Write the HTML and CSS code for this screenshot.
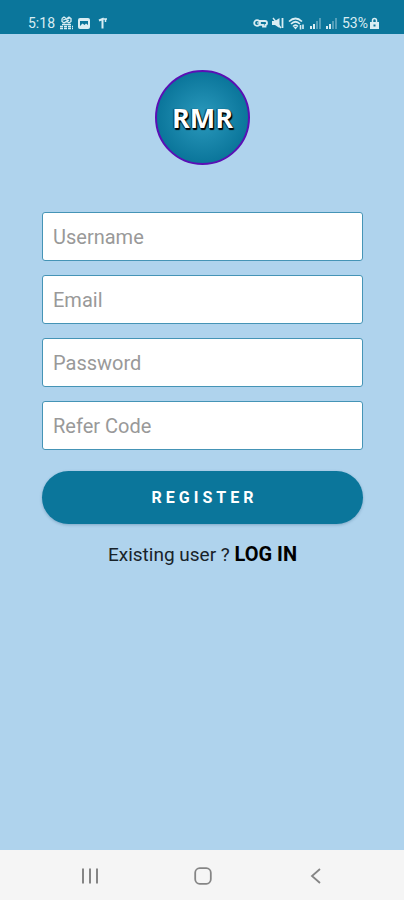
FILE: index.html
```html
<!DOCTYPE html>
<html lang="en">
<head>
<meta charset="utf-8">
<meta name="viewport" content="width=device-width, initial-scale=1">
<title>Register</title>
<link rel="stylesheet" href="styles.css">
</head>
<body>
<header class="status">
  <div class="status-group">
    <span class="time">5:18</span>
    <svg class="icon-app" width="15" height="14" viewBox="0 0 15 14" fill="none" stroke="currentColor">
      <path d="M3 2.500 5 1l2 1.500M3 2.500v3l2 1.500 2-1.500M8 2.500 10 1l2 1.500v3L10 7 8 5.500zM4 4l7-2M5 7l5-3" stroke-width="1.300"/>
      <path d="M1 10.500h13M1 12.500h13" stroke-width="1.600" stroke-dasharray="3 1"/>
      <path d="M3 8.500h9" stroke-width="1.400"/>
    </svg>
    <svg class="icon-image" width="12" height="11" viewBox="0 0 12 11">
      <path fill="currentColor" fill-rule="evenodd" d="M2 0h8a2 2 0 0 1 2 2v7a2 2 0 0 1-2 2H2a2 2 0 0 1-2-2V2a2 2 0 0 1 2-2zm0 3v5l2.500-2.500L6.500 7 8 5.500 10 7V3z"/>
    </svg>
    <svg class="icon-one" width="10" height="12" viewBox="0 0 10 12" fill="none" stroke="currentColor">
      <path d="M1 3.500 4.500 2v9.500" stroke-width="2"/>
      <path d="M5 2h4M7.500 2v3" stroke-width="1.500"/>
    </svg>
  </div>
  <div class="status-group status-right">
    <svg width="15" height="10" viewBox="0 0 15 10" fill="none" stroke="currentColor" stroke-width="1.800">
      <circle cx="4" cy="5" r="2.800"/>
      <path d="M6 3h6q2 0 2 2t-1.500 2v1.500H10V6.800H6.500"/>
      <path d="M4 5h4" stroke-width="1.200"/>
    </svg>
    <svg class="icon-mute" width="12" height="12" viewBox="0 0 12 12" fill="none" stroke="currentColor">
      <path d="M0 4h3l4.500-3v10L3 8H0z" fill="currentColor" stroke="none"/>
      <path d="M1 1l8 10" stroke-width="1.400"/>
      <path d="M10.500 1v10" stroke-width="1.800"/>
    </svg>
    <svg class="icon-wifi" width="18" height="13" viewBox="0 0 18 13" fill="none" stroke="currentColor" stroke-width="1.700">
      <path d="M1 4.500q6.500-6 13 0M3 7q4.500-4.500 9 0M5 9.500q2.500-2.500 5 0"/>
      <path d="M5.500 10h4l-2 2.500z" fill="currentColor" stroke="none"/>
      <path d="M12.500 8v4.500M15 7.500V12" stroke-width="1.600"/>
    </svg>
    <svg class="icon-signal" width="12" height="11" viewBox="0 0 12 11" fill="currentColor">
      <path d="M0 8h2v3H0zM3 6h2v5H3z"/>
      <path opacity=".35" d="M6 3h2v8H6zM9 0h2v11H9z"/>
    </svg>
    <svg class="icon-signal" width="12" height="11" viewBox="0 0 12 11" fill="currentColor">
      <path d="M0 8h2v3H0zM3 6h2v5H3z"/>
      <path opacity=".35" d="M6 3h2v8H6zM9 0h2v11H9z"/>
    </svg>
    <span class="battery">53%</span>
    <svg class="icon-lock" width="9" height="12" viewBox="0 0 9 12">
      <path d="M2.500 5V3.500q0-2 2-2t2 2V5" fill="none" stroke="currentColor" stroke-width="1.500"/>
      <path d="M0 5h9v7H0zM3.500 7.500v2h2v-2z" fill="currentColor" fill-rule="evenodd"/>
    </svg>
  </div>
</header>
<main class="content">
  <h1 class="logo">RMR</h1>
  <form class="form">
    <input class="field" type="text" placeholder="Username" aria-label="Username">
    <input class="field" type="email" placeholder="Email" aria-label="Email">
    <input class="field" type="password" placeholder="Password" aria-label="Password">
    <input class="field" type="text" placeholder="Refer Code" aria-label="Refer Code">
    <button class="register" type="submit">REGISTER</button>
  </form>
  <p class="existing">Existing user ? <a class="login" href="#">LOG IN</a></p>
</main>
<nav class="navbar" aria-label="System">
  <button class="nav-button" type="button" aria-label="Recent apps">
    <svg width="18" height="18" viewBox="0 0 18 18" fill="none" stroke="currentColor" stroke-width="2"><path d="M2 1.500v15M9 1.500v15M16 1.500v15"/></svg>
  </button>
  <button class="nav-button" type="button" aria-label="Home">
    <svg width="18" height="18" viewBox="0 0 18 18" fill="none" stroke="currentColor" stroke-width="1.800"><rect x="1.200" y="1.200" width="15.600" height="15.600" rx="4.500"/></svg>
  </button>
  <button class="nav-button" type="button" aria-label="Back">
    <svg width="18" height="18" viewBox="0 0 18 18" fill="none" stroke="currentColor" stroke-width="1.800"><path d="M13 2 5 9l8 7"/></svg>
  </button>
</nav>
</body>
</html>
```
FILE: styles.css
```css
* {
  box-sizing: border-box;
}

body {
  margin: 0;
  min-height: 100vh;
  display: flex;
  flex-direction: column;
  background: #afd3ed;
  font-family: Roboto, "Liberation Sans", sans-serif;
  color: #182229;
}

.status {
  display: flex;
  justify-content: space-between;
  height: 34px;
  padding: 12px 25px 0 28px;
  background: #0b769b;
  color: #d9edf3;
  font-size: 14px;
  line-height: 22px;
}

.status-group {
  display: flex;
  align-items: center;
  gap: 4px;
}

.icon-one {
  margin-left: 4px;
}

.status-right {
  gap: 4px;
}

.battery {
  margin-right: -2px;
}

.content {
  flex: 1;
  display: flex;
  flex-direction: column;
  padding: 36px 41px 0 42px;
}

.logo {
  align-self: center;
  display: flex;
  align-items: center;
  justify-content: center;
  width: 95px;
  height: 95px;
  margin: 0 0 47px;
  border: 2px solid #5a0fb5;
  border-radius: 50%;
  background: radial-gradient(circle, #2b9abd, #0b769b 70%);
  color: #fff;
  font-family: "Open Sans", "Noto Sans", sans-serif;
  font-size: 27px;
  font-weight: 700;
  line-height: 32px;
  text-shadow: 1px 1px 1px #000, 1px 2px 1px #000, -1px 0 1px #063a4e;
}

.form {
  display: flex;
  flex-direction: column;
  gap: 14px;
}

.field {
  width: 100%;
  height: 49px;
  padding: 0 10px;
  border: 1px solid #4594b6;
  border-radius: 3px;
  background: #fff;
  color: #222;
  font-family: inherit;
  font-size: 20px;
}

.field::placeholder {
  color: #999;
  opacity: 1;
}

.register {
  height: 53px;
  margin-top: 7px;
  padding: 0 0 0 4px;
  border: 0;
  border-radius: 27px;
  background: #0b769b;
  box-shadow: 0 1px 3px rgba(20, 70, 110, 0.3);
  color: #fff;
  font-family: inherit;
  font-size: 16px;
  font-weight: 700;
  letter-spacing: 4px;
}

.existing {
  margin: 17px 0 0;
  font-size: 19px;
  line-height: 26px;
  text-align: center;
}

.login {
  color: #000;
  font-size: 20px;
  font-weight: 700;
  text-decoration: none;
}

.navbar {
  display: flex;
  justify-content: center;
  height: 50px;
  padding-left: 2px;
  background: #f5f5f5;
  color: #858585;
}

.nav-button {
  display: flex;
  align-items: center;
  justify-content: center;
  width: 28%;
  padding: 2px 0 0;
  border: 0;
  background: none;
  color: inherit;
}
```
